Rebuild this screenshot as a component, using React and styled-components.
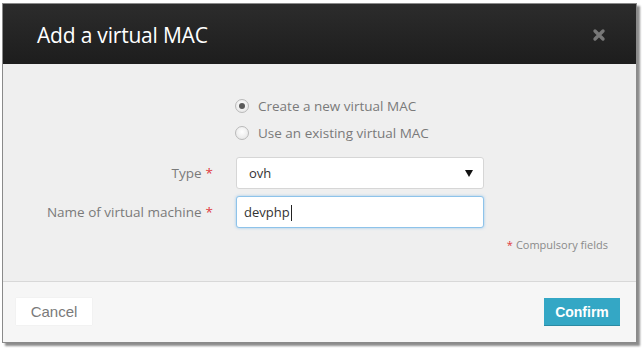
import React from "react";
import styled, { createGlobalStyle } from "styled-components";

const Global = createGlobalStyle`
  html, body { margin: 0; padding: 0; background: #ffffff; }
  body { font-family: "Open Sans", "Noto Sans", sans-serif; }
  #root { width: 644px; height: 351px; overflow: hidden; }
`;

const Page = styled.div`
  padding: 3px 0 0 2px;
`;

const Dialog = styled.div`
  width: 633px;
  border: 1px solid #8a8a8a;
  box-shadow: 3px 3px 2px rgba(0, 0, 0, 0.45);
  background: #efefef;
`;

const Header = styled.div`
  height: 60px;
  background: linear-gradient(#2c2c2c, #1d1d1d);
  display: flex;
  align-items: center;
  justify-content: space-between;
  padding: 0 30px 0 34px;
`;

const Title = styled.h1`
  margin: 0;
  color: #ffffff;
  font-family: "Open Sans", sans-serif;
  font-weight: 400;
  font-size: 21px;
  letter-spacing: -0.2px;
  padding-top: 2px;
`;

const Close = styled.span`
  width: 14px;
  height: 14px;
  display: flex;
  margin-top: 2px;
`;

const Body = styled.div`
  height: 217px;
  box-sizing: border-box;
  padding-top: 28px;
  display: flex;
  flex-direction: column;
`;

const FormGrid = styled.div`
  display: grid;
  grid-template-columns: 210px 248px;
  column-gap: 23px;
  align-items: center;
`;

const RadioRow = styled.label`
  grid-column: 2;
  height: 27px;
  display: flex;
  align-items: center;
  gap: 9px;
  margin-left: -1px;
  color: #7a7a7a;
  font-size: 13.5px;
`;

const RadioDot = styled.span`
  width: 12px;
  height: 12px;
  border-radius: 50%;
  border: 1px solid #b9b9b9;
  background: radial-gradient(circle at 50% 40%, #ffffff, #e2e2e2);
  display: flex;
  align-items: center;
  justify-content: center;
  &::after {
    content: "";
    width: 6px;
    height: 6px;
    border-radius: 50%;
    background: ${(p) => (p.$checked ? "#5a5a5a" : "transparent")};
  }
`;

const Label = styled.div`
  text-align: right;
  color: #7a7a7a;
  font-size: 13.5px;
  margin-top: ${(p) => p.$top || 0}px;
`;

const Star = styled.span`
  color: #e0393e;
  margin: ${(p) => (p.$lead ? "0 3px 0 0" : "0 0 0 4px")};
`;

const Field = styled.div`
  height: 32px;
  box-sizing: border-box;
  margin-top: ${(p) => p.$top || 0}px;
  background: #ffffff;
  border: 1px solid ${(p) => (p.$focus ? "#8ec3ea" : "#d6d6d6")};
  box-shadow: ${(p) => (p.$focus ? "0 0 3px rgba(102,175,233,0.6)" : "none")};
  border-radius: 3px;
  display: flex;
  align-items: center;
  justify-content: space-between;
  padding: 0 8px 0 ${(p) => p.$pl}px;
  color: #333;
  font-size: 13px;
`;

const Caret = styled.span`
  display: inline-block;
  width: 1px;
  height: 16px;
  background: #222;
  margin-left: 1px;
  vertical-align: middle;
`;

const Arrow = styled.span`
  width: 0;
  height: 0;
  border-left: 4px solid transparent;
  border-right: 4px solid transparent;
  border-top: 7px solid #111;
  margin-right: 2px;
`;

const Note = styled.div`
  align-self: flex-end;
  margin: 9px 28px 0 0;
  font-size: 11px;
  color: #8a8a8a;
`;

const Footer = styled.div`
  height: 61px;
  box-sizing: border-box;
  border-top: 1px solid #d8d8d8;
  background: #f6f6f6;
  display: flex;
  justify-content: space-between;
  align-items: flex-start;
  padding: 16px 16px 0 13px;
`;

const Button = styled.button`
  width: 76px;
  height: 27px;
  border: none;
  font-family: "Liberation Sans", Arial, sans-serif;
  font-size: ${(p) => (p.$primary ? 14 : 15)}px;
  background: ${(p) => (p.$primary ? "#34a7c5" : "#ffffff")};
  color: ${(p) => (p.$primary ? "#ffffff" : "#7a7a7a")};
  font-weight: ${(p) => (p.$primary ? 700 : 400)};
  box-shadow: ${(p) => (p.$primary ? "0 1px 0 #2b8aa3" : "0 0 1px #e0e0e0")};
`;

export default function App() {
  return (
    <>
      <Global />
      <Page>
        <Dialog>
          <Header>
            <Title>Add a virtual MAC</Title>
            <Close>
              <svg width="14" height="14" viewBox="0 0 14 14">
                <path d="M3 3 L11 11 M11 3 L3 11" stroke="#777" strokeWidth="3.4" strokeLinecap="round" />
              </svg>
            </Close>
          </Header>
          <Body>
            <FormGrid>
              <RadioRow>
                <RadioDot $checked />
                Create a new virtual MAC
              </RadioRow>
              <RadioRow>
                <RadioDot />
                Use an existing virtual MAC
              </RadioRow>
              <Label $top={11}>
                Type<Star>*</Star>
              </Label>
              <Field $top={11} $pl={12}>
                ovh
                <Arrow />
              </Field>
              <Label $top={7}>
                Name of virtual machine<Star>*</Star>
              </Label>
              <Field $top={7} $pl={7} $focus>
                <span>
                  devphp<Caret />
                </span>
              </Field>
            </FormGrid>
            <Note>
              <Star $lead>*</Star>Compulsory fields
            </Note>
          </Body>
          <Footer>
            <Button>Cancel</Button>
            <Button $primary>Confirm</Button>
          </Footer>
        </Dialog>
      </Page>
    </>
  );
}
